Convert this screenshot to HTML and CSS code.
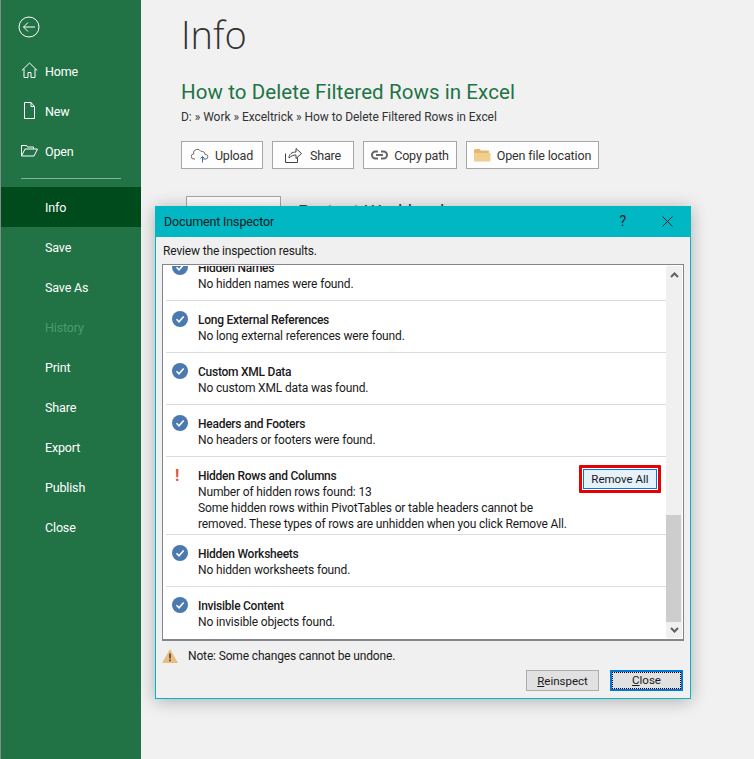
FILE: index.html
```html
<!DOCTYPE html>
<html lang="en">
<head>
<meta charset="utf-8">
<title>Document Inspector</title>
<link rel="stylesheet" href="styles.css">
</head>
<body>
<div class="app">
  <nav class="side">
    <svg class="back" width="22" height="22" viewBox="0 0 22 22" fill="none" stroke="#fff" stroke-width="1"><circle cx="11" cy="11" r="10"/><path d="M5.5 11H17M10 6.5 5.5 11l4.500 4.500"/></svg>
    <a class="nav"><svg class="ico" width="17" height="17" viewBox="0 0 17 17" fill="none" stroke="#fff"><path d="M.8 8.500 8.500 1l7.700 7.500M3 7v8.500h4V10.500h3v5h4V7"/></svg>Home</a>
    <a class="nav"><svg class="ico" width="17" height="17" viewBox="0 0 17 17" fill="none" stroke="#fff"><path d="M3.500.500h6.500l3.500 4v12h-10zM10 .500V4.500h3.500"/></svg>New</a>
    <a class="nav"><svg class="ico" width="17" height="17" viewBox="0 0 17 17" fill="none" stroke="#fff"><path d="M.5 14V3.500h5l1 1.500h6v2M.5 14l3.500-7h12.500l-3.500 7z"/></svg>Open</a>
    <div class="rule"></div>
    <a class="nav active">Info</a>
    <a class="nav">Save</a>
    <a class="nav">Save As</a>
    <a class="nav off">History</a>
    <a class="nav">Print</a>
    <a class="nav">Share</a>
    <a class="nav">Export</a>
    <a class="nav">Publish</a>
    <a class="nav">Close</a>
  </nav>
  <main class="main">
    <h1 class="title">Info</h1>
    <h2 class="doc">How to Delete Filtered Rows in Excel</h2>
    <div class="path">D: » Work » Exceltrick » How to Delete Filtered Rows in Excel</div>
    <div class="actions">
      <button class="act act-upload"><svg width="18" height="16" viewBox="0 0 18 16" fill="none"><path d="M4 12H3a2.500 2.500 0 0 1-.5-5A4 4 0 0 1 10 4.500 3 3 0 0 1 14 7.500a2.300 2.300 0 0 1 1 4.500h-3" stroke="#6d6d6d"/><path d="M11.500 15.500V9.500M9.500 11.500l2-2 2 2" stroke="#2e75b6"/></svg>Upload</button>
      <button class="act act-share"><svg width="17" height="18" viewBox="0 0 17 18" fill="none" stroke="#444"><path d="M.5 7.500v9h12v-5"/><path d="M4 12c0-4 3-6 7-6V2.500l5.500 5-5.500 5V9c-3 0-5 1-7 3z"/></svg>Share</button>
      <button class="act act-copy"><svg width="17" height="10" viewBox="0 0 17 10" fill="none" stroke="#666" stroke-width="2"><path d="M7 1.500H4.500a3.500 3.500 0 0 0 0 7H7M10 1.500h2.500a3.500 3.500 0 0 1 0 7H10M5 5h7"/></svg>Copy path</button>
      <button class="act act-open"><svg width="17" height="14" viewBox="0 0 17 14"><path d="M0 2.500Q0 1 1.500 1h4l1.500 1.500h8V5H0z" fill="#e2b96e"/><path d="M0 5h16.500v7.500q0 1-1 1H1q-1 0-1-1z" fill="#f0cf8e"/></svg>Open file location</button>
    </div>
    <div class="protect">
      <div class="protect-box"></div>
      <div class="protect-text">Protect Workbook</div>
    </div>
  </main>
</div>

<section class="dialog">
  <header class="dlg-head">
    <span class="dlg-title">Document Inspector</span>
    <span class="dlg-help">?</span>
    <svg class="dlg-x" width="11" height="11" viewBox="0 0 11 11" stroke="#222" fill="none"><path d="M.5.500l10 10M10.500.500l-10 10"/></svg>
  </header>
  <div class="dlg-body">
    <p class="lead">Review the inspection results.</p>
    <div class="box">
      <div class="list">
        <div class="rows">
          <div class="row"><svg class="st" viewBox="0 0 16 16"><circle cx="8" cy="8" r="8" fill="#4a7ab0"/><path d="M4.500 8.300 7 10.800l4.700-5.300" fill="none" stroke="#fff" stroke-width="1.600"/></svg><div class="txt"><b>Hidden Names</b><span>No hidden names were found.</span></div></div>
          <div class="row"><svg class="st" viewBox="0 0 16 16"><circle cx="8" cy="8" r="8" fill="#4a7ab0"/><path d="M4.500 8.300 7 10.800l4.700-5.300" fill="none" stroke="#fff" stroke-width="1.600"/></svg><div class="txt"><b>Long External References</b><span>No long external references were found.</span></div></div>
          <div class="row"><svg class="st" viewBox="0 0 16 16"><circle cx="8" cy="8" r="8" fill="#4a7ab0"/><path d="M4.500 8.300 7 10.800l4.700-5.300" fill="none" stroke="#fff" stroke-width="1.600"/></svg><div class="txt"><b>Custom XML Data</b><span>No custom XML data was found.</span></div></div>
          <div class="row"><svg class="st" viewBox="0 0 16 16"><circle cx="8" cy="8" r="8" fill="#4a7ab0"/><path d="M4.500 8.300 7 10.800l4.700-5.300" fill="none" stroke="#fff" stroke-width="1.600"/></svg><div class="txt"><b>Headers and Footers</b><span>No headers or footers were found.</span></div></div>
          <div class="row row-tall"><span class="warn">!</span><div class="txt"><b>Hidden Rows and Columns</b><span>Number of hidden rows found: 13</span><span>Some hidden rows within PivotTables or table headers cannot be</span><span>removed. These types of rows are unhidden when you click Remove All.</span></div>
            <div class="mark"><button class="remove">Remove All</button></div></div>
          <div class="row"><svg class="st" viewBox="0 0 16 16"><circle cx="8" cy="8" r="8" fill="#4a7ab0"/><path d="M4.500 8.300 7 10.800l4.700-5.300" fill="none" stroke="#fff" stroke-width="1.600"/></svg><div class="txt"><b>Hidden Worksheets</b><span>No hidden worksheets found.</span></div></div>
          <div class="row row-last"><svg class="st" viewBox="0 0 16 16"><circle cx="8" cy="8" r="8" fill="#4a7ab0"/><path d="M4.500 8.300 7 10.800l4.700-5.300" fill="none" stroke="#fff" stroke-width="1.600"/></svg><div class="txt"><b>Invisible Content</b><span>No invisible objects found.</span></div></div>
        </div>
      </div>
      <div class="sb">
        <svg class="arrow arrow-up" width="9" height="6" viewBox="0 0 9 6" fill="none" stroke="#606060" stroke-width="2"><path d="M1 5l3.500-3.500L8 5"/></svg>
        <div class="track"><div class="thumb"></div></div>
        <svg class="arrow arrow-down" width="9" height="6" viewBox="0 0 9 6" fill="none" stroke="#606060" stroke-width="2"><path d="M1 1l3.500 3.500L8 1"/></svg>
      </div>
    </div>
    <div class="note">
      <svg width="16" height="14" viewBox="0 0 16 14"><path d="M8 0 16 14H0z" fill="#e9bd7d"/><path d="M7.200 4.500h1.600v5H7.200zM7.200 10.500h1.600v1.800H7.200z" fill="#444"/></svg>
      <span>Note: Some changes cannot be undone.</span>
    </div>
    <div class="foot">
      <button class="btn"><u>R</u>einspect</button>
      <button class="btn btn-default"><span class="focus"><u>C</u>lose</span></button>
    </div>
  </div>
</section>
</body>
</html>
```
FILE: styles.css
```css
* { box-sizing: border-box; }
html, body { margin: 0; height: 100%; }
body {
  width: 754px;
  height: 759px;
  overflow: hidden;
  background: #f1f1f1;
  font-family: Roboto, "Noto Sans", sans-serif;
  font-size: 12px;
  letter-spacing: -.15px;
  color: #1a1a1a;
  position: relative;
}
button { font: inherit; letter-spacing: inherit; color: inherit; padding: 0; cursor: default; }

.app { display: flex; height: 759px; }

.side {
  width: 141px;
  flex: none;
  background: #217346;
  border-left: 1px solid #8a8a8a;
  color: #fff;
  display: flex;
  flex-direction: column;
}
.back { margin: 16px 0 0 17px; flex: none; }
.nav {
  height: 40px;
  flex: none;
  display: flex;
  align-items: center;
  padding-left: 44px;
  position: relative;
  font-size: 12.500px;
}
.back + .nav { margin-top: 13px; }
.ico { position: absolute; left: 20px; top: 11px; }
.active { background: #004b1c; }
.off { color: #4c9a6e; }
.rule { height: 1px; background: #7fb498; margin: 7px 20px 8px 20px; flex: none; }

.main { flex: 1; padding: 0 0 0 40px; min-width: 0; }
.title { margin: 10px 0 0; font-family: "Open Sans", sans-serif; font-weight: 300; font-size: 38px; line-height: 48px; color: #333; letter-spacing: 0; }
.doc { margin: 20px 0 0; font-weight: 400; font-size: 20.500px; line-height: 28px; color: #217346; letter-spacing: .08px; }
.path { margin-top: 3px; line-height: 16px; font-size: 12px; color: #333; letter-spacing: -.04px; }

.actions { display: flex; gap: 9px; margin-top: 16px; }
.act {
  height: 28px;
  display: flex;
  align-items: center;
  justify-content: center;
  gap: 6px;
  background: #fdfdfd;
  border: 1px solid #a6a6a6;
  font-size: 12.500px;
  color: #333;
}
.act-upload { width: 82px; }
.act-share { width: 82px; gap: 8px; }
.act-copy { width: 94px; }
.act-open { width: 133px; }

.protect { display: flex; align-items: flex-start; margin: 27px 0 0 5px; gap: 17px; }
.protect-box { width: 95px; height: 40px; background: #fdfdfd; border: 1px solid #a6a6a6; }
.protect-text { font-size: 19px; line-height: 24px; color: #444; margin-top: 4px; letter-spacing: 0; }

.dialog {
  position: absolute;
  left: 155px;
  top: 206px;
  width: 536px;
  height: 493px;
  background: #f0f0f0;
  border: 1px solid #00b7c3;
  box-shadow: 0 2px 16px rgba(0, 0, 0, .28);
  display: flex;
  flex-direction: column;
}
.dlg-head {
  height: 30px;
  flex: none;
  background: #00b7c3;
  display: flex;
  align-items: center;
  padding: 0 17px 2px 8px;
  color: #1b1b1b;
}
.dlg-title { flex: 1; font-size: 12.500px; }
.dlg-help { font-size: 14px; margin-right: 36px; }
.dlg-body { flex: 1; display: flex; flex-direction: column; padding: 0 6px 0 6px; min-height: 0; }
.lead { margin: 6px 0 5px 1px; line-height: 16px; font-size: 12px; }

.box {
  height: 377px;
  flex: none;
  background: #fff;
  border: 1px solid #82858b;
  border-bottom-width: 2px;
  display: flex;
  padding: 1px 1px 1px 0;
}
.list { flex: 1; overflow: hidden; min-width: 0; }
.rows { margin-top: -17px; }
.row {
  height: 52px;
  position: relative;
  border-bottom: 1px solid #dcdcdc;
  margin: 0 0 0 3px;
  padding: 11px 0 0 32px;
}
.row-tall { height: 78px; }
.row-last { border-bottom: 0; }
.st { position: absolute; left: 6px; top: 10px; width: 16px; height: 16px; }
.warn { position: absolute; left: 9px; top: 9px; font-size: 16px; line-height: 20px; font-weight: 700; color: #d9583b; }
.txt { display: flex; flex-direction: column; line-height: 16px; color: #1a1a1a; }
.txt b { font-weight: 500; letter-spacing: -.25px; }
.mark {
  position: absolute;
  right: 5px;
  top: 8px;
  width: 82px;
  height: 28px;
  border: 3px solid #e60000;
  border-radius: 1px;
  background: #fff;
  padding: 1px;
}
.remove { width: 100%; height: 100%; display: block; background: #e5f1fb; border: 1px solid #0078d7; font-size: 11.500px; letter-spacing: 0; }

.sb { width: 16px; flex: none; background: #f0f0f0; display: flex; flex-direction: column; align-items: center; }
.arrow { flex: none; }
.arrow-up { margin: 6px 0 6px; }
.arrow-down { margin: 5px 0 5px; }
.track { flex: 1; width: 100%; position: relative; }
.thumb { position: absolute; left: 0; right: 1px; bottom: 0; height: 107px; background: #cdcdcd; }

.note { display: flex; align-items: center; gap: 10px; margin-top: 7px; height: 16px; }
.foot { display: flex; justify-content: flex-end; gap: 11px; margin-top: 6px; padding-right: 1px; }
.btn { width: 73px; height: 21px; background: #e1e1e1; border: 1px solid #adadad; font-size: 11.500px; letter-spacing: 0; }
.btn-default { border: 2px solid #0078d7; padding: 0; }
.focus { height: 100%; border: 1px dotted #000; display: block; line-height: 15px; }
```
